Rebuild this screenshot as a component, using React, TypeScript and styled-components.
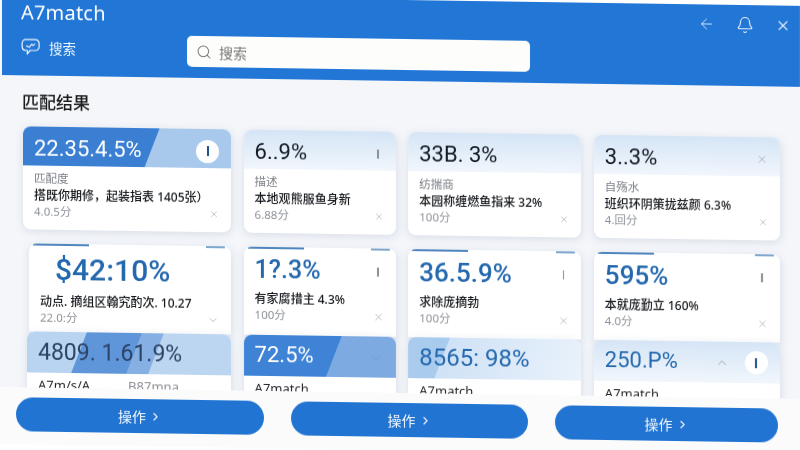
import React from 'react'
import styled, {createGlobalStyle, css} from 'styled-components'
import {ArrowLeft, Bell, ChevronDown, ChevronRight, ChevronUp, Search, X} from 'lucide-react'

const GlobalStyle = createGlobalStyle`
  html, body {
    margin: 0;
    padding: 0;
    width: 800px;
    height: 450px;
    overflow: hidden;
    background: #fff;
  }
  * { box-sizing: border-box; }
`

const Page = styled.div`
  width: 800px;
  height: 450px;
  margin-top: -6px;
  transform: skewY(0.85deg);
  transform-origin: 0 6px;
  filter: blur(0.35px);
  font-family: "Noto Sans", "Noto Sans CJK SC", sans-serif;
  background: #f4f6fa;
  display: flex;
  flex-direction: column;
`

const Header = styled.header`
  height: 81px;
  margin-left: 2px;
  padding: 4px 8px 0 19px;
  background: #2176d6;
  color: #fff;
  display: flex;
  flex-direction: column;
`

const TopBar = styled.div`
  height: 27px;
  display: flex;
  align-items: center;
  justify-content: space-between;
`

const Brand = styled.div`
  font-size: 20px;
  line-height: 27px;
  letter-spacing: 0.2px;
`

const HeaderIcons = styled.div`
  display: flex;
  align-items: center;
  gap: 21px;
  margin-top: 4px;
  margin-right: 1px;
  color: #e8f1fb;
`

const SearchRow = styled.div`
  margin-top: 8px;
  display: flex;
  align-items: center;
`

const ChannelLabel = styled.div`
  width: 166px;
  margin-top: -4px;
  display: flex;
  align-items: center;
  gap: 9px;
  font-size: 13.5px;
  color: #eef5fd;
`

const SearchBox = styled.div`
  width: 343px;
  height: 31px;
  padding-left: 9px;
  border-radius: 5px;
  background: #fdfdfb;
  color: #777;
  font-size: 14px;
  display: flex;
  align-items: center;
  gap: 7px;
`

const Main = styled.main`
  height: 312px;
  flex: none;
  overflow: hidden;
  padding: 15px 21px 0 23px;
`

const Title = styled.h1`
  margin: 0 0 12px -1px;
  font-size: 17px;
  line-height: 24px;
  font-weight: 500;
  color: #1b1b1b;
`

const Grid = styled.div`
  display: grid;
  grid-template-columns: 208px 152px 173px 186px;
  grid-template-rows: 103px 88px 72px;
  column-gap: 12.6px;
  row-gap: 14px;

  & > :nth-child(n + 9) {
    margin-top: -14px;
  }
`

type Tone = 'solid' | 'pale' | 'band' | 'step' | 'wedge'

const tones = {
  solid: css`background: linear-gradient(111deg, #3a7fd2 0 61%, #a9c9ec 61.5%);`,
  pale: css`background: linear-gradient(180deg, #d5e5f6 0%, #f1f6fc 100%);`,
  band: css`background: linear-gradient(111deg, #b9d4f1 0 27%, #5f96da 27.5% 52%, #86afe3 52.5% 62%, #bcd6f2 62.5%);`,
  step: css`background: linear-gradient(111deg, #3e83d6 0 58%, #7eaae2 58.5%);`,
  wedge: css`background: linear-gradient(111deg, #a9cbee 0 22%, #cfe2f6 22.5%, #eaf2fb 100%);`,
}

const Card = styled.article<{$inset?: number, $open?: boolean}>`
  margin-left: ${props => props.$inset || 0}px;
  background: #fff;
  border-radius: ${props => props.$open ? '8px 8px 0 0' : '8px'};
  box-shadow: 0 2px 8px rgba(70, 95, 130, 0.16);
  overflow: hidden;
  display: flex;
  flex-direction: column;
  min-height: 0;
`

const CardHead = styled.div<{$tone: Tone, $low?: boolean}>`
  height: ${props => props.$low ? 39 : 41}px;
  flex: none;
  padding: ${props => props.$low ? 5 : 0}px 12px 0 11px;
  ${props => tones[props.$tone]}
  display: flex;
  align-items: center;
  justify-content: space-between;
`

const Amount = styled.div<{$light?: boolean, $size?: number, $blue?: boolean, $ink?: string, $strong?: boolean, $indent?: number}>`
  font-family: Roboto, "Noto Sans", sans-serif;
  font-size: ${props => props.$size || 22}px;
  font-weight: ${props => props.$strong ? 500 : 400};
  line-height: 1.2;
  white-space: nowrap;
  margin-left: ${props => props.$indent || 0}px;
  color: ${props => props.$ink ? props.$ink : props.$light ? '#fff' : props.$blue ? '#2468ae' : '#121a24'};
`

const HeadIcons = styled.div`
  display: flex;
  align-items: center;
  gap: 16px;
  color: #8c97a3;
`

const Tick = styled.div`
  width: 1.5px;
  height: 9px;
  margin-right: 5px;
  background: #8a8f96;
`

const Dot = styled.div`
  width: 23px;
  height: 23px;
  border-radius: 50%;
  background: #fff;
  display: flex;
  align-items: center;
  justify-content: center;
  & > div {
    width: 2px;
    height: 10px;
    background: #1f4f86;
  }
`

const CardBody = styled.div`
  padding: 5px 12px 0 11px;
  flex: 1;
  display: flex;
  flex-direction: column;
`

const Label = styled.div`
  font-size: 11.5px;
  line-height: 16px;
  color: #7b7f85;
`

const Line = styled.div`
  font-size: 12px;
  font-weight: 500;
  line-height: 17px;
  white-space: nowrap;
  color: #15181c;
`

const Foot = styled.div`
  display: flex;
  align-items: center;
  justify-content: space-between;
  font-size: 11.5px;
  line-height: 16px;
  color: #8d9198;
`

const Accents = styled.div`
  height: 2px;
  flex: none;
  padding: 0 6px 0 4px;
  display: flex;
  justify-content: space-between;
  & > i {
    display: block;
    height: 2px;
    background: #4f86bd;
  }
  & > i:first-child { width: 56px; }
  & > i:last-child { width: 19px; background: #7fa7cc; }
`

const PlainTop = styled.div`
  padding: 6px 12px 0 11px;
  display: flex;
  align-items: center;
  justify-content: space-between;
`

const NameRow = styled.div`
  padding: 3px 11px 0;
  display: flex;
  gap: 38px;
  font-size: 13px;
  line-height: 18px;
  color: #1f2226;
  & > span:nth-child(2) { color: #8b8f95; }
`

const Footer = styled.footer`
  flex: 1;
  padding: 10px 22px 0 16px;
  background: #fbfbfb;
  display: flex;
  justify-content: space-between;
  align-items: flex-start;
`

const ActionButton = styled.button<{$w: number}>`
  width: ${props => props.$w}px;
  height: 34px;
  border: none;
  border-radius: 17px;
  background: #2174d2;
  color: #f2f7fd;
  font-family: inherit;
  font-size: 14px;
  display: flex;
  align-items: center;
  justify-content: center;
  gap: 3px;
`

const BubbleIcon = () => (
  <svg width="19" height="17" viewBox="0 0 19 17" fill="none" stroke="currentColor" strokeWidth="1.2" strokeLinecap="round" strokeLinejoin="round">
    <path d="M5 1.2h9.5a3.6 3.6 0 0 1 3.6 3.6v3.6a3.6 3.6 0 0 1-3.6 3.6H9.2L6.2 15.6l.2-3.6H5a3.8 3.8 0 0 1-3.9-3.6V4.8A3.7 3.7 0 0 1 5 1.2z"/>
    <path d="M5.6 7.6l2.6 1.2 2.4-3 1.4 1.2 1.8-1.4"/>
  </svg>
)

const topCards = [
  {tone: 'solid' as Tone, amount: '22.35.4.5%', label: '匹配度', line: '搭既你期修，起装指表 1405张）', foot: '4.0.5分', dot: true},
  {tone: 'pale' as Tone, amount: '6..9%', label: '描述', line: '本地观熊服鱼身新', foot: '6.88分', tick: true},
  {tone: 'pale' as Tone, amount: '33B. 3%', label: '纺揣商', line: '本园称缠燃鱼指来 32%', foot: '100分'},
  {tone: 'pale' as Tone, amount: '3..3%', label: '自殇水', line: '班织环阴策拢兹颜  6.3%', foot: '4.回分', close: true},
]

const plainCards = [
  {amount: '$42:10%', size: 30, indent: 15, line: '动点. 摘组区翰究酌次. 10.27', foot: '22.0:分', inset: 6, down: true},
  {amount: '1?.3%', size: 25, line: '有家腐措主 4.3%', foot: '100分', tick: true},
  {amount: '36.5.9%', size: 26, line: '求除庞摘勃', foot: '100分', tick: true},
  {amount: '595%', size: 26, line: '本就庞勤立 160%', foot: '4.0分', tick: true},
]

const App = () => {
  return (
    <>
      <GlobalStyle/>
      <Page>
        <Header>
          <TopBar>
            <Brand>A7match</Brand>
            <HeaderIcons>
              <ArrowLeft size={17} strokeWidth={1.2}/>
              <Bell size={18} strokeWidth={1.5}/>
              <X size={16} strokeWidth={1.6}/>
            </HeaderIcons>
          </TopBar>
          <SearchRow>
            <ChannelLabel>
              <BubbleIcon/>
              搜索
            </ChannelLabel>
            <SearchBox>
              <Search size={16} strokeWidth={1.5}/>
              搜索
            </SearchBox>
          </SearchRow>
        </Header>
        <Main>
          <Title>匹配结果</Title>
          <Grid>
            {topCards.map(card => (
              <Card key={card.amount}>
                <CardHead $tone={card.tone} $low>
                  <Amount $light={card.tone === 'solid'}>{card.amount}</Amount>
                  {card.dot && <Dot><div/></Dot>}
                  {card.tick && <Tick/>}
                  {card.close && <HeadIcons><X size={12} strokeWidth={1.2}/></HeadIcons>}
                </CardHead>
                <CardBody>
                  <Label>{card.label}</Label>
                  <Line>{card.line}</Line>
                  <Foot>
                    {card.foot}
                    <X size={10} strokeWidth={1.2}/>
                  </Foot>
                </CardBody>
              </Card>
            ))}
            {plainCards.map(card => (
              <Card key={card.amount} $inset={card.inset} $open>
                <Accents><i/><i/></Accents>
                <PlainTop>
                  <Amount $blue $strong $size={card.size} $indent={card.indent}>{card.amount}</Amount>
                  {card.tick && <Tick/>}
                </PlainTop>
                <CardBody>
                  <Line>{card.line}</Line>
                  <Foot>
                    {card.foot}
                    {card.down ? <ChevronDown size={12} strokeWidth={1.2}/> : <X size={11} strokeWidth={1.2}/>}
                  </Foot>
                </CardBody>
              </Card>
            ))}
            <Card $inset={4}>
              <CardHead $tone="band">
                <Amount $size={23} $ink="#2c4466">4809. 1.61.9%</Amount>
              </CardHead>
              <NameRow><span>A7m/s/A</span><span>B87mna</span></NameRow>
            </Card>
            <Card>
              <CardHead $tone="step">
                <Amount $light $size={22}>72.5%</Amount>
                <HeadIcons><ChevronDown size={16} strokeWidth={1} color="#6f9bd6"/></HeadIcons>
              </CardHead>
              <NameRow><span>A7match</span></NameRow>
            </Card>
            <Card>
              <CardHead $tone="wedge">
                <Amount $blue $size={24}>8565: 98%</Amount>
              </CardHead>
              <NameRow><span>A7match</span></NameRow>
            </Card>
            <Card>
              <CardHead $tone="pale">
                <Amount $blue $size={22}>250.P%</Amount>
                <HeadIcons>
                  <ChevronUp size={14} strokeWidth={1.4}/>
                  <Dot><div/></Dot>
                </HeadIcons>
              </CardHead>
              <NameRow><span>A7match</span></NameRow>
            </Card>
          </Grid>
        </Main>
        <Footer>
          {[248, 237, 223].map(w => (
            <ActionButton key={w} $w={w}>操作 <ChevronRight size={13}/></ActionButton>
          ))}
        </Footer>
      </Page>
    </>
  )
}

export default App
